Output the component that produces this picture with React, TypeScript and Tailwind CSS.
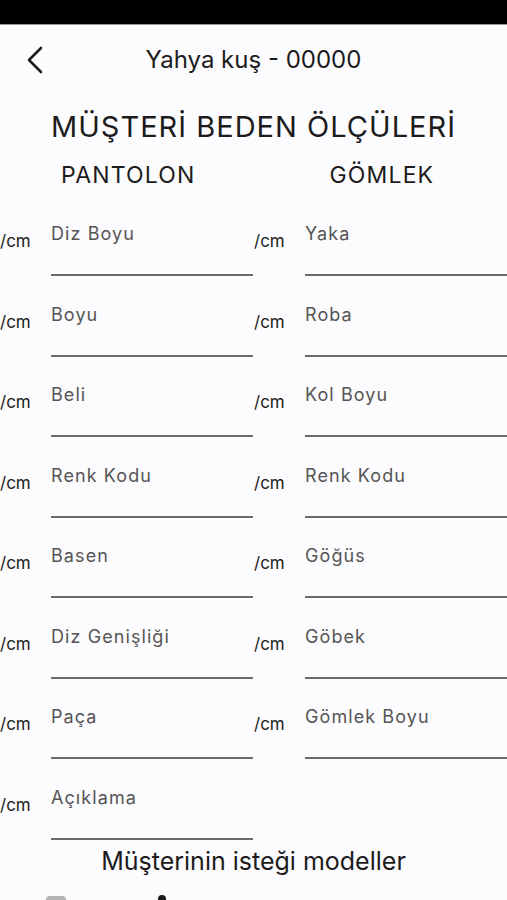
const pantolon = ["Diz Boyu", "Boyu", "Beli", "Renk Kodu", "Basen", "Diz Genişliği", "Paça", "Açıklama"];
const gomlek = ["Yaka", "Roba", "Kol Boyu", "Renk Kodu", "Göğüs", "Göbek", "Gömlek Boyu"];

function Field({ label }: { label: string }) {
  return (
    <div className="flex h-[80.5px]">
      <div className="w-[51px] shrink-0 pt-[26px] text-[17px] leading-[20px] text-[#222]">/cm</div>
      <div className="flex flex-1 flex-col">
        <div className="pt-[18px] text-[18px] leading-[22px] tracking-[0.06em] text-[#555]">{label}</div>
        <div className="mt-[29px] h-[2px] bg-[#6b6b6b]" />
      </div>
    </div>
  );
}

export default function App() {
  return (
    <div
      className="h-[900px] overflow-hidden bg-[#fcfbfd] text-[#1c1c1c]"
      style={{ fontFamily: "Inter, 'Noto Sans', sans-serif" }}
    >
      <div className="h-[25px] border-b border-[#9a9a9a] bg-black" />

      <header className="relative flex h-[70px] items-center justify-center">
        <svg
          className="absolute left-[24px] top-[20px]"
          width="24"
          height="30"
          viewBox="0 0 24 30"
          fill="none"
          stroke="#1c1c1c"
          strokeWidth="2.6"
          strokeLinecap="round"
          strokeLinejoin="round"
        >
          <polyline points="17,3 5,15 17,27" />
        </svg>
        <h1 className="text-[24px] leading-[30px] text-[#1c1c1c]">Yahya kuş - 00000</h1>
      </header>

      <h2 className="mt-[15px] text-center text-[29px] leading-[34px] tracking-[0.035em]">MÜŞTERİ BEDEN ÖLÇÜLERİ</h2>

      <div className="mt-[17px] grid grid-cols-2">
        <div className="pl-[61px] text-[23px] leading-[28px] tracking-[0.05em]">PANTOLON</div>
        <div className="pl-[76px] text-[23px] leading-[28px] tracking-[0.05em]">GÖMLEK</div>
      </div>

      <div className="mt-[16px] grid grid-cols-[253px_1fr]">
        <div>
          {pantolon.map((l) => (
            <Field key={l} label={l} />
          ))}
        </div>
        <div className="pl-[1px]">
          {gomlek.map((l) => (
            <Field key={l} label={l} />
          ))}
        </div>
      </div>

      <p className="-mt-[3px] text-center text-[25px] leading-[30px]">Müşterinin isteği modeller</p>

      <div className="relative mt-[18px] h-[20px]">
        <div className="absolute left-[46px] top-[2px] h-[8px] w-[20px] rounded-sm bg-[#b5b5b5]" />
        <div className="absolute left-[158px] top-[1px] h-[8px] w-[8px] rounded-full bg-[#1c1c1c]" />
      </div>
    </div>
  );
}
